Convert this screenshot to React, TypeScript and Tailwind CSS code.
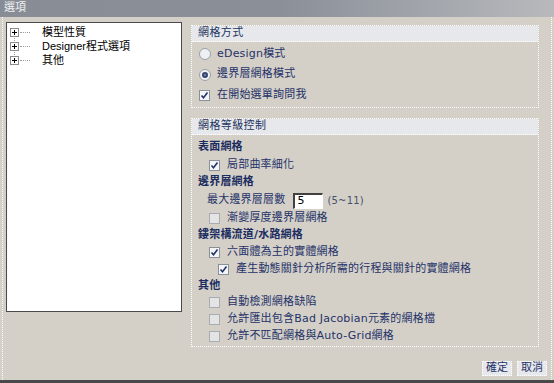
const FONT = { fontFamily: '"DejaVu Sans", "Noto Sans CJK TC", sans-serif' };

type Row =
  | { kind: 'head'; text: string; h: number }
  | { kind: 'check'; text: string; checked?: boolean; disabled?: boolean; indent: number; h: number }
  | { kind: 'input'; text: string; h: number };

const rows: Row[] = [
  { kind: 'head', text: '表面網格', h: 17 },
  { kind: 'check', text: '局部曲率細化', checked: true, indent: 17, h: 18 },
  { kind: 'head', text: '邊界層網格', h: 17 },
  { kind: 'input', text: '最大邊界層層數', h: 19 },
  { kind: 'check', text: '漸變厚度邊界層網格', disabled: true, indent: 17, h: 17 },
  { kind: 'head', text: '鏤架構流道/水路網格', h: 17 },
  { kind: 'check', text: '六面體為主的實體網格', checked: true, indent: 17, h: 17 },
  { kind: 'check', text: '產生動態關針分析所需的行程與關針的實體網格', checked: true, indent: 26, h: 17 },
  { kind: 'head', text: '其他', h: 16 },
  { kind: 'check', text: '自動檢測網格缺陷', disabled: true, indent: 17, h: 17 },
  { kind: 'check', text: '允許匯出包含Bad Jacobian元素的網格檔', disabled: true, indent: 17, h: 17 },
  { kind: 'check', text: '允許不匹配網格與Auto-Grid網格', disabled: true, indent: 17, h: 17 },
];

const CheckBox = ({ checked, disabled }: { checked?: boolean; disabled?: boolean }) => (
  <span
    className={`flex h-[11px] w-[11px] shrink-0 items-center justify-center border ${
      disabled ? 'border-[#a8acb4] bg-[#e4e4e4]' : 'border-[#8a9099] bg-[#f4f5f7]'
    }`}
  >
    {checked && (
      <svg width="9" height="9" viewBox="0 0 9 9">
        <path d="M1.5 4.5 L3.5 6.8 L7.5 1.5" fill="none" stroke="#21346a" strokeWidth="1.6" />
      </svg>
    )}
  </span>
);

const Radio = ({ selected }: { selected?: boolean }) => (
  <span className="flex h-[12px] w-[12px] shrink-0 items-center justify-center rounded-full border border-[#9aa0a8] bg-[#eef0f3]">
    {selected && <span className="h-[6px] w-[6px] rounded-full border-2 border-[#33456f] bg-[#8893a8]" />}
  </span>
);

const GroupHeader = ({ title }: { title: string }) => (
  <div className="flex h-[16px] items-center border-b border-dotted border-white bg-[#e6e8ec] pl-[6px] text-[11px] tracking-[0.4px] text-[#24355f]">
    {title}
  </div>
);

const TreeItem = ({ label }: { label: string }) => (
  <div className="flex h-[14px] items-center">
    <span className="relative flex h-[9px] w-[9px] items-center justify-center border border-[#8c8c8c] bg-white">
      <span className="absolute h-[1px] w-[5px] bg-black" />
      <span className="absolute h-[5px] w-[1px] bg-black" />
    </span>
    <span className="ml-[1px] w-[10px] border-t border-dotted border-[#9a9a9a]" />
    <span className="ml-[12px] text-[11px] text-black" style={{ fontFamily: '"Liberation Sans", "Noto Sans CJK TC", sans-serif' }}>
      {label}
    </span>
  </div>
);

export default function App() {
  return (
    <div className="flex h-[383px] w-[554px] flex-col overflow-hidden bg-[#d4d0c8]" style={FONT}>
      <div className="flex h-[17px] shrink-0 items-center bg-gradient-to-r from-[#878c95] via-[#8a8f98] to-[#b7b9bc] pl-[4px] text-[11px] text-[#eef0f2]">
        選項
      </div>
      <div className="mx-[2px] flex flex-1 flex-col border-x border-dotted border-white">
        <div className="flex items-start pl-[3px] pt-[5px]">
          <div className="relative h-[290px] w-[176px] border border-[#4a4a4a] bg-white pl-[3px] pt-[2px]">
            <div className="absolute left-[7px] top-[12px] h-[28px] border-l border-dotted border-[#9a9a9a]" />
            <TreeItem label="模型性質" />
            <TreeItem label="Designer程式選項" />
            <TreeItem label="其他" />
          </div>
          <div className="ml-[9px] flex w-[348px] flex-col gap-[10px] pt-[3px]">
            <div className="border border-dotted border-white">
              <GroupHeader title="網格方式" />
              <div className="pb-[2px] pt-[2px] text-[11px] tracking-[0.2px] text-[#1f3268]">
                <div className="flex h-[20px] items-center pl-[7px]">
                  <Radio />
                  <span className="ml-[6px]">eDesign模式</span>
                </div>
                <div className="flex h-[21px] items-center pl-[7px]">
                  <Radio selected />
                  <span className="ml-[6px]">邊界層網格模式</span>
                </div>
                <div className="flex h-[20px] items-center pl-[7px]">
                  <CheckBox checked />
                  <span className="ml-[7px]">在開始選單詢問我</span>
                </div>
              </div>
            </div>
            <div className="border border-dotted border-white">
              <GroupHeader title="網格等級控制" />
              <div className="pb-[1px] pt-[4px] text-[11px] tracking-[0.2px] text-[#1f3268]">
                {rows.map((r, i) => {
                  if (r.kind === 'head')
                    return (
                      <div key={i} className="flex items-center pl-[6px] font-bold text-[#1a2c60]" style={{ height: r.h }}>
                        {r.text}
                      </div>
                    );
                  if (r.kind === 'input')
                    return (
                      <div key={i} className="flex items-center pl-[15px]" style={{ height: r.h }}>
                        <span>{r.text}</span>
                        <span className="ml-[8px] flex h-[16px] w-[30px] items-center border-l-2 border-t-2 border-[#404040] border-b border-r border-b-white border-r-white bg-white pl-[2px] text-black">
                          5
                        </span>
                        <span className="ml-[4px] text-[10px] text-[#44506e]">(5~11)</span>
                      </div>
                    );
                  return (
                    <div key={i} className="flex items-center" style={{ paddingLeft: r.indent, height: r.h }}>
                      <CheckBox checked={r.checked} disabled={r.disabled} />
                      <span className="ml-[7px]">{r.text}</span>
                    </div>
                  );
                })}
              </div>
            </div>
          </div>
        </div>
        <div className="mt-[14px] flex justify-end gap-[5px] pr-[4px]">
          {['確定', '取消'].map((t) => (
            <button
              key={t}
              className="flex h-[15px] w-[30px] items-center justify-center border border-dotted border-white bg-[#e6e8ec] text-[11px] text-[#1f3268]"
            >
              {t}
            </button>
          ))}
        </div>
      </div>
      <div className="h-[3px] shrink-0 bg-[#4a4a4a]" />
    </div>
  );
}
